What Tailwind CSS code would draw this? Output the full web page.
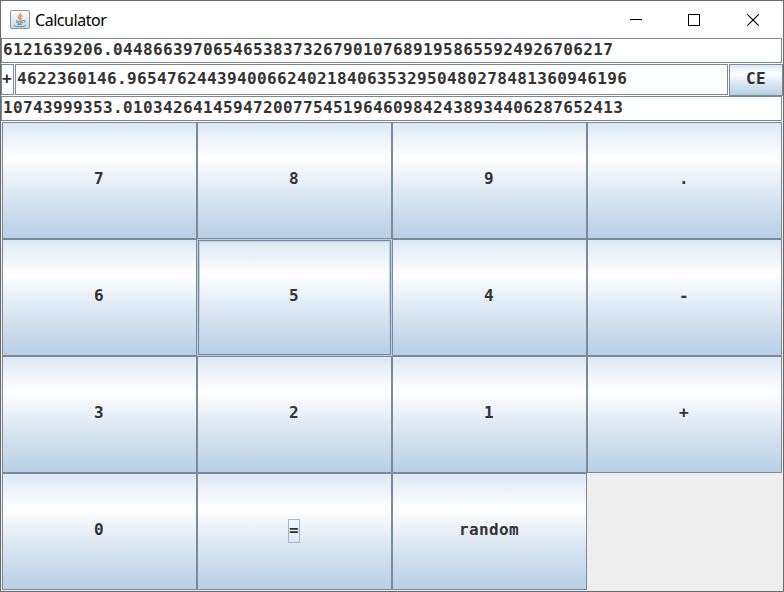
<!DOCTYPE html>
<html lang="en">
<head>
<meta charset="utf-8">
<title>Calculator</title>
<script src="https://cdn.jsdelivr.net/npm/@tailwindcss/browser@4"></script>
</head>
<body class="overflow-hidden">
<div class="flex h-[592px] w-[784px] flex-col border border-[#6b6b6b] bg-white font-['DejaVu_Sans_Mono',monospace] text-[16px] font-bold tracking-[0.37px] text-[#333333]">
  <header class="flex h-[37px] shrink-0 items-center pl-[9px] font-normal text-black">
    <svg class="h-5 w-5" viewBox="0 0 20 20" fill="none">
      <defs><linearGradient id="tile" x1="0" y1="0" x2="0" y2="1"><stop offset="0" stop-color="#fdfdfd"/><stop offset="1" stop-color="#cfd6de"/></linearGradient></defs>
      <rect x=".5" y=".5" width="19" height="18" rx="1.5" fill="url(#tile)" stroke="#8499ad"/>
      <path d="M10.500 3c.8 2-2.600 2.700-2.200 4.300 .2 1 1.500 1.500 1.700 2.400M12.300 5.500c-2 .8-2.400 1.700-1.400 2.700.5.7.2 1.200-.3 1.800" stroke="#e88b42" stroke-width="1.400"/>
      <path d="M6 10.800c2 .7 5 .7 7 0M6.500 12.500c2 .8 4.500 .8 6.300 0M7.300 14.200c1.500.5 3 .5 4.500 0M13.300 10.500c2.300-.5 2.300 1.500.2 2.300M4.500 15c-1 1.300 2 1.600 5 1.600s6.500-.4 6-1.600" stroke="#587f9e" stroke-width="1"/>
    </svg>
    <h1 class="ml-[5px] font-['Noto_Sans','Open_Sans',sans-serif] text-[16px] tracking-[-0.45px]">Calculator</h1>
    <div class="mr-[24px] ml-auto flex gap-[47px]">
      <svg class="-mr-px h-3 w-3" viewBox="0 0 12 12"><path d="M0 5.500H12" stroke="#000"/></svg>
      <svg class="h-3 w-3" viewBox="0 0 12 12"><rect x=".5" y=".5" width="11" height="11" fill="none" stroke="#000"/></svg>
      <svg class="h-3 w-3" viewBox="0 0 12 12"><path d="M.3 .3L11.700 11.700M11.700 .3L.3 11.700" stroke="#000" stroke-width="1.100"/></svg>
    </div>
  </header>

  <div class="mr-px mb-px flex h-[25px] shrink-0 items-center border border-[#7a8a99] pb-0.5 pl-px leading-none whitespace-nowrap">6121639206.04486639706546538373267901076891958655924926706217</div>
  <div class="flex h-8 shrink-0">
    <div class="mr-px flex h-[31px] w-[13px] items-center border border-[#7a8a99] pb-0.5 leading-none">+</div>
    <div class="mr-px flex h-[31px] w-[713px] items-center border border-[#7a8a99] pb-0.5 pl-px leading-none whitespace-nowrap">4622360146.96547624439400662402184063532950480278481360946196</div>
    <button class="flex-1 border border-[#7a8a99] bg-[linear-gradient(#dde8f3_0%,#fff_30%,#dde8f3_60%,#b8cfe5_100%)] pb-0.5 leading-none">CE</button>
  </div>
  <div class="mr-px mb-px flex h-[25px] shrink-0 items-center border border-[#7a8a99] pb-0.5 pl-px leading-none whitespace-nowrap">10743999353.01034264145947200775451964609842438934406287652413</div>

  <main class="grid flex-1 grid-cols-[repeat(4,195px)] grid-rows-[repeat(4,117px)] bg-[#eeeeee] pl-px [&>button]:border [&>button]:border-[#7a8a99] [&>button]:bg-[linear-gradient(#dde8f3_0%,#fff_30%,#dde8f3_60%,#b8cfe5_100%)] [&>button]:pr-px [&>button]:pb-1 [&>button]:leading-none">
    <button>7</button><button>8</button><button>9</button><button>.</button>
    <button>6</button>
    <div class="border border-[#b8cfe5]"><div class="flex h-full items-center justify-center border border-[#7a8a99] bg-[linear-gradient(#dde8f3_0%,#fff_30%,#dde8f3_60%,#b8cfe5_100%)] pr-px pb-1 leading-none shadow-[inset_0_0_0_1px_#b8cfe5]">5</div></div>
    <button>4</button><button>-</button>
    <button>3</button><button>2</button><button>1</button><button>+</button>
    <button>0</button>
    <button><span class="mt-0.5 inline-flex h-6 w-3 items-center justify-center border border-[#a3b8cc] pb-0.5">=</span></button>
    <button>random</button>
  </main>
</div>
</body>
</html>
